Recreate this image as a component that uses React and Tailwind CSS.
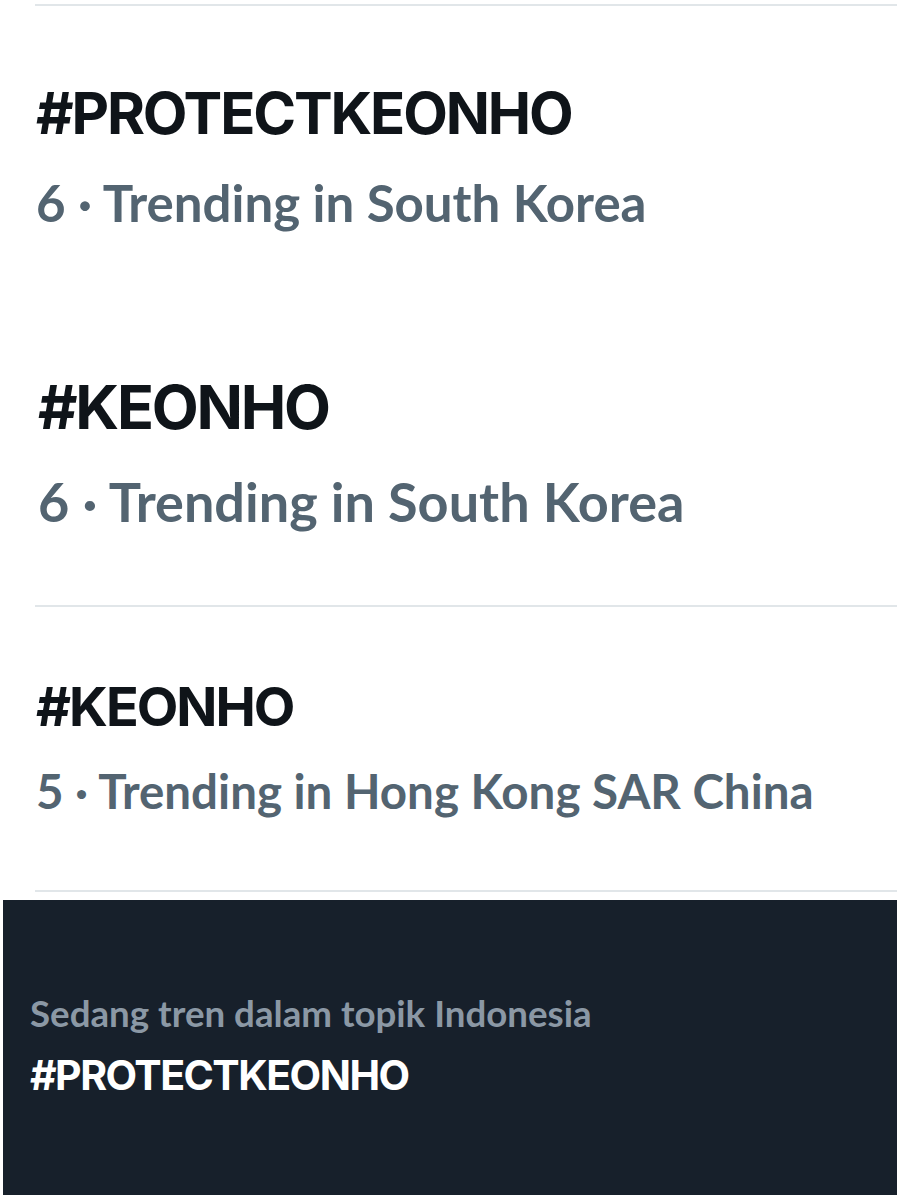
import React from 'react';

const HEAD = "font-['Inter','Liberation_Sans',sans-serif] font-bold text-[#0f1419] tracking-[-0.037em]";
const SUB = "font-['Lato','Liberation_Sans',sans-serif] font-bold text-[#536471]";

const Divider = () => <div className="h-[2px] bg-[#e1e6e9]" />;

export default function App() {
    return (
        <div className="h-[1200px] bg-white overflow-hidden">
            <div className="pt-[4px] ml-[35px] mr-[3px]">
                <Divider />

                {/* first trend */}
                <div className="pt-[78px] pl-[1px]">
                    <div className={`${HEAD} text-[58px] leading-[58px]`}>#PROTECTKEONHO</div>
                    <div className={`${SUB} text-[51px] leading-[51px] mt-[35px]`}>6 · Trending in South Korea</div>
                </div>

                {/* second trend */}
                <div className="pt-[149px] pl-[3px]">
                    <div className={`${HEAD} text-[61px] leading-[61px]`}>#KEONHO</div>
                    <div className={`${SUB} text-[54px] leading-[54px] mt-[37px]`}>6 · Trending in South Korea</div>
                </div>

                <div className="mt-[76px]">
                    <Divider />
                </div>

                {/* third trend */}
                <div className="pt-[73px] pl-[1px]">
                    <div className={`${HEAD} text-[54px] leading-[54px]`}>#KEONHO</div>
                    <div className={`${SUB} text-[47.5px] leading-[48px] mt-[33px]`}>5 · Trending in Hong Kong SAR China</div>
                </div>

                <div className="mt-[75px]">
                    <Divider />
                </div>
            </div>

            {/* dark notice */}
            <div className="mt-[8px] mx-[3px] h-[295px] bg-[#17202b] pt-[95px] pl-[27px]">
                <div className="font-['Lato','Liberation_Sans',sans-serif] font-bold text-[36.7px] leading-[36px] text-[#8b98a5]">
                    Sedang tren dalam topik Indonesia
                </div>
                <div className="font-['Inter','Liberation_Sans',sans-serif] font-bold text-[41px] leading-[41px] text-white tracking-[-0.037em] mt-[24px]">
                    #PROTECTKEONHO
                </div>
            </div>
        </div>
    );
}
